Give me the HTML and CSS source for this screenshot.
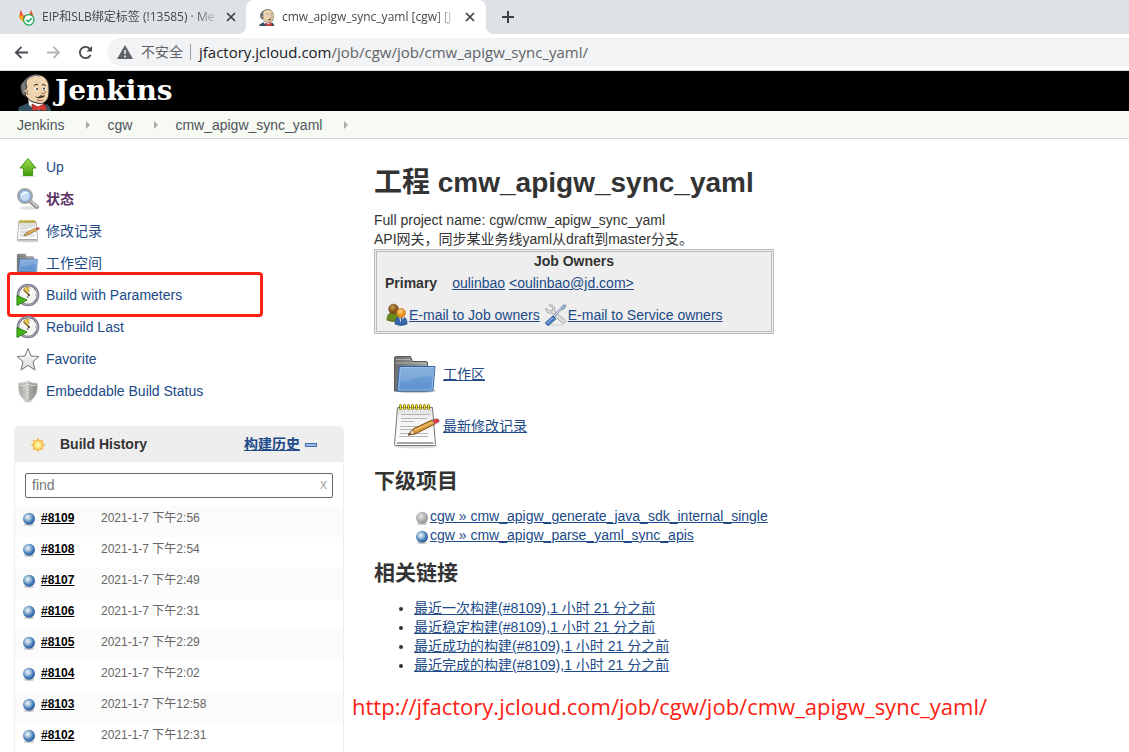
FILE: index.html
```html
<!DOCTYPE html>
<html lang="zh-CN">
<head>
<meta charset="utf-8">
<meta name="viewport" content="width=device-width, initial-scale=1">
<title>cmw_apigw_sync_yaml [cgw] [Jenkins]</title>
<link rel="stylesheet" href="styles.css">
</head>
<body>
<svg class="sprite" width="0" height="0" aria-hidden="true">
  <defs>
    <linearGradient id="gGreen" x1="0" y1="0" x2="0" y2="1"><stop offset="0" stop-color="#a3e052"/><stop offset="1" stop-color="#3f9a0c"/></linearGradient>
    <linearGradient id="gBlue" x1="0" y1="0" x2="0" y2="1"><stop offset="0" stop-color="#79a5d8"/><stop offset="1" stop-color="#5c92cf"/></linearGradient>
    <linearGradient id="gGrey" x1="0" y1="0" x2="1" y2="0"><stop offset="0" stop-color="#6e6e6e"/><stop offset="1" stop-color="#a3a3a3"/></linearGradient>
    <linearGradient id="gPaper" x1="0" y1="0" x2="0" y2="1"><stop offset="0" stop-color="#dcdcdc"/><stop offset=".3" stop-color="#f4f4f4"/><stop offset="1" stop-color="#fff"/></linearGradient>
    <linearGradient id="gShield" x1="0" y1="0" x2="1" y2="0"><stop offset="0" stop-color="#a2a29e"/><stop offset=".48" stop-color="#d2d2ce"/><stop offset=".52" stop-color="#aeaeaa"/><stop offset="1" stop-color="#888884"/></linearGradient>
    <linearGradient id="gStar" x1="0" y1="0" x2="0" y2="1"><stop offset="0" stop-color="#fff"/><stop offset="1" stop-color="#d8d8d8"/></linearGradient>
    <radialGradient id="gBall" cx=".4" cy=".38" r=".62"><stop offset="0" stop-color="#eff6fa"/><stop offset=".35" stop-color="#a9c5dc"/><stop offset=".7" stop-color="#4a7fbb"/><stop offset="1" stop-color="#2d5b9d"/></radialGradient>
    <radialGradient id="gBallGrey" cx=".4" cy=".38" r=".62"><stop offset="0" stop-color="#e4e4e4"/><stop offset=".5" stop-color="#bcbcbc"/><stop offset="1" stop-color="#8e8e8e"/></radialGradient>
    <radialGradient id="gSun"><stop offset="0" stop-color="#fffbc0"/><stop offset="1" stop-color="#fcd14c"/></radialGradient>
    <radialGradient id="gHeadA" cx=".4" cy=".3"><stop offset="0" stop-color="#c99a55"/><stop offset="1" stop-color="#835217"/></radialGradient>
    <radialGradient id="gHeadB" cx=".4" cy=".3"><stop offset="0" stop-color="#ffd27c"/><stop offset="1" stop-color="#e8901c"/></radialGradient>
  </defs>

  <symbol id="i-gitlab" viewBox="0 0 18 18">
    <path d="M1 9 3 1l2 6h7l2-6 3 8-9 7z" fill="#fc6d26"/><path d="M3 1l2 6H2zM14 1l-2 6h3z" fill="#e24329"/><path d="M5 7h7l-4 9z" fill="#e24329"/><path d="M1 9 2 7h3l3 9z" fill="#fca326"/>
    <circle cx="11.500" cy="11.500" r="5.500" fill="#fff" stroke="#1aaa55" stroke-width="1.300"/><path d="m9 11.500 2 2 3.500-3.700" fill="none" stroke="#1aaa55" stroke-width="1.600"/>
  </symbol>

  <symbol id="i-butler" viewBox="0 0 34 37">
    <path d="M1 37l1-4 9-4 10 4 9-3 3 3 1 4z" fill="#335061"/>
    <path d="M11 24h14l2 8-5 4h-4l-6-5z" fill="#fff"/>
    <path d="M8 20c-2-4-2-9 1-13C12 2 18 1 22 1c7 1 10 7 10 13s0 10-3 13-6 3-9 2c-5-1-9-3-10-6-1 0-2-1-2-3z" fill="#edd3ae" stroke="#231f20"/>
    <path d="M4 15c-1-3 0-5 2-7l4-4c-1 3-1 4-1 6l1 3-2 3 1 3-1 3c-3-1-4-4-4-7z" fill="#777a80" stroke="#231f20" stroke-width=".8"/>
    <path d="M8 7c4-5 9-7 15-5" fill="none" stroke="#777a80" stroke-width="1.400"/>
    <path d="M7 16c2-2 4 0 3 2l1 3" fill="#edd3ae" stroke="#6d4c3a" stroke-width=".8"/>
    <path d="M17 12c1-2 3-2 4-1M25 11c2-1 3 0 4 1" fill="none" stroke="#231f20"/>
    <path d="M25 14c1 2 4 4 3 5s-2 1-4 0" fill="none" stroke="#8c6a50"/>
    <ellipse cx="19.500" cy="15" rx="2.200" ry="1.500" fill="#fff"/><ellipse cx="27" cy="14.500" rx="2" ry="1.500" fill="#fff"/>
    <circle cx="20" cy="15" r="1" fill="#231f20"/><circle cx="27" cy="14.500" r="1" fill="#231f20"/>
    <path d="M18 22c2 2 4 1 6-1 1 1 3 1 4 0 0 2-2 3-4 3-2 1-5 0-6-2z" fill="#4c3a32"/><path d="M20 26c2 1 4 1 6 0" fill="none" stroke="#b5544a"/>
    <path d="m15 30 6 3 6-3 3 5-2 2-6-2-5 2-2-2z" fill="#d33833" stroke="#81231f" stroke-width=".7"/><circle cx="22" cy="34" r="1.700" fill="#ef3d3a"/>
  </symbol>

  <symbol id="i-up" viewBox="0 0 24 24">
    <ellipse cx="12" cy="21" rx="8" ry="1.500" fill="#e3e3e3"/>
    <path d="M12 3.500 20 13h-3.500v7.500h-9V13H4z" fill="url(#gGreen)" stroke="#419b13" stroke-linejoin="round"/>
  </symbol>
  <symbol id="i-search" viewBox="0 0 24 24">
    <ellipse cx="13" cy="21" rx="9" ry="1.800" fill="#dedede"/>
    <path d="m14 14 7 6" stroke="#888" stroke-width="4" stroke-linecap="round"/><path d="m15 14 6 5.500" stroke="#c8c8c8" stroke-width="2" stroke-linecap="round"/>
    <circle cx="9" cy="9" r="7" fill="#cfe0f5" stroke="#a6a6a6" stroke-width="2"/>
    <circle cx="9" cy="9" r="5.500" fill="#c6dcf5" stroke="#6f9ad0"/><path d="M5 9c1-5 5-5 8-3-2 0-5 1-8 3z" fill="#f2f8ff"/>
  </symbol>
  <symbol id="i-notes" viewBox="0 0 48 48">
    <ellipse cx="24" cy="44" rx="22" ry="2.500" fill="#ddd"/>
    <path d="M5.500 5.500h35l3 37q0 1-1 1h-39q-1 0-1-1z" fill="url(#gPaper)" stroke="#777"/>
    <path d="M5 40h36.500v2H4.500z" fill="#a7a7a7"/>
    <path d="M9 12.500h29M9 16.500h26M9 19.500h13M8 24.500h28M8 27.500h22M8 31.500h28M7 34.500h29" stroke="#b4b4b4"/>
    <g fill="#f5e04a" stroke="#8a7900"><rect x="7.500" y="2.500" width="2" height="5" rx="1"/><rect x="11.500" y="2.500" width="2" height="5" rx="1"/><rect x="15.500" y="2.500" width="2" height="5" rx="1"/><rect x="19.500" y="2.500" width="2" height="5" rx="1"/><rect x="23.500" y="2.500" width="2" height="5" rx="1"/><rect x="27.500" y="2.500" width="2" height="5" rx="1"/><rect x="31.500" y="2.500" width="2" height="5" rx="1"/><rect x="35.500" y="2.500" width="2" height="5" rx="1"/></g>
    <path d="m16 33 5-6 19-9 3 4-20 10z" fill="#d99a3c" stroke="#7d5112"/><path d="m21 29 20-9" stroke="#f4c778" stroke-width="1.300"/><path d="m16 33 5-6 2 5z" fill="#ead8a8" stroke="#6b4b18" stroke-width=".7"/><path d="m16 33 2-2 1 1z" fill="#222"/>
    <path d="m40 18 3-1q5-1 4 3l-4 2z" fill="#e2353b" stroke="#888" stroke-width=".7"/>
  </symbol>
  <symbol id="i-folder" viewBox="0 0 48 48">
    <ellipse cx="23" cy="41" rx="21" ry="2" fill="#ccc"/>
    <path d="M2.500 41V8q0-1.500 1.500-1.500h14.500l2 5H34q1.500 0 1.500 1.500v28z" fill="url(#gGrey)" stroke="#5c5c5c"/>
    <path d="M4 9.500h14M4 13h30" stroke="#b9b9b9" stroke-width=".8"/>
    <path d="M7.500 16.500h35.500L41 40q0 1-1.500 1H5z" fill="url(#gBlue)" stroke="#2f63a6"/>
    <path d="M8.500 17.500h33.500L40 40H6.500z" fill="none" stroke="#a7c5e8" stroke-width=".8"/><path d="M9 18h32l-1 9c-11-3-18 4-32 4z" fill="#fff" opacity=".12"/>
  </symbol>
  <symbol id="i-clock" viewBox="0 0 24 24">
    <circle cx="12" cy="12" r="10" fill="#f5f5f2" stroke="#77778a" stroke-width="2.600"/><circle cx="12" cy="12" r="10" fill="none" stroke="#b2b2be" stroke-width=".8"/>
    <path d="M12 12 7 7l3-3 3 0z" fill="#e9c34a" stroke="#9e8433" stroke-width=".6"/><path d="m8 7 5 5-2 3" fill="none" stroke="#555"/><circle cx="13" cy="12" r="1" fill="#333"/>
    <path d="M19 12h1M18 7l1-1M18 17l1 1" stroke="#888"/>
    <path d="M1 12.500v10L11 17z" fill="#45b51b" stroke="#2b7b0d" stroke-linejoin="round"/>
  </symbol>
  <symbol id="i-star" viewBox="0 0 24 24">
    <path d="m12 1.500 3 7.500 8 .5-6 5.200 2 8.300-7-4.500-7 4.500 2-8.300L1 9.500 9 9z" fill="url(#gStar)" stroke="#777" stroke-linejoin="round"/>
  </symbol>
  <symbol id="i-shield" viewBox="0 0 24 24">
    <ellipse cx="12" cy="22.500" rx="5" ry="1" fill="#ddd"/>
    <path d="M12 2c3 2 6 2.500 9 2 1 9-1 15-9 19-8-4-10-10-9-19 3 .5 6 0 9-2z" fill="url(#gShield)" stroke="#c4c4c0"/>
    <path d="M12 3v18" stroke="#eee" stroke-width="1.200" stroke-dasharray="1 1"/><path d="M4 6c3 1 5 1 7-1M20 6c-3 1-5 1-7-1" fill="none" stroke="#ddd"/>
  </symbol>
  <symbol id="i-ball" viewBox="0 0 14 14"><ellipse cx="7" cy="12.500" rx="5" ry="1.500" fill="#ccc"/><circle cx="7" cy="6.700" r="6" fill="url(#gBall)"/></symbol>
  <symbol id="i-ball-grey" viewBox="0 0 14 14"><ellipse cx="7" cy="12.500" rx="5" ry="1.500" fill="#ccc"/><circle cx="7" cy="6.700" r="6" fill="url(#gBallGrey)"/></symbol>
  <symbol id="i-sun" viewBox="0 0 16 16">
    <path d="m8 .5 2 3.200 3.400-1.100-1.100 3.400L15.500 8l-3.200 2 1.100 3.400-3.400-1.100L8 15.500l-2-3.200-3.400 1.100L3.700 10 .5 8l3.200-2-1.100-3.400L6 3.700z" fill="#f6b95b"/>
    <circle cx="8" cy="8" r="4.800" fill="url(#gSun)" stroke="#f3b04a" stroke-width=".8"/>
  </symbol>
  <symbol id="i-users" viewBox="0 0 24 24">
    <path d="M2 17c0-6 3-8 7-8 4 1 5 4 5 8q-6 3-12 0z" fill="#6c8a1c" stroke="#4d6610" stroke-width=".7"/><circle cx="8.500" cy="6" r="4.800" fill="url(#gHeadA)" stroke="#6a410f" stroke-width=".6"/>
    <path d="M10 21c0-6 2-7 6-7s6 1 6 7q-6 3-12 0z" fill="#3668ad" stroke="#1f4683" stroke-width=".7"/><path d="m14 14 2 6 3-6z" fill="#fff"/><path d="m16 15 1 5 0-5z" stroke="#29558f"/><circle cx="16" cy="10" r="4.500" fill="url(#gHeadB)" stroke="#b9680d" stroke-width=".6"/>
  </symbol>
  <symbol id="i-tools" viewBox="0 0 24 24">
    <ellipse cx="12" cy="22" rx="9" ry="1.300" fill="#ddd"/>
    <path d="M5 2l4 3-1 3-4-1-2-2c-1 4 2 6 6 5l10 10q4 1 3-3L11 9c1-4-2-8-6-7z" fill="#dedede" stroke="#a2a2a2" stroke-width=".9"/>
    <path d="m9 14 9-9" stroke="#8296b0" stroke-width="2.400"/><path d="m10 13 9-9" stroke="#e8eef5"/><path d="m17 5 2-3 3 0-1 3-3 2z" fill="#9db2cc" stroke="#667a96" stroke-width=".6"/>
    <path d="m9 13 3 3-7 6q-2 1-3-1t0-2z" fill="#4c7fc2" stroke="#2e5995" stroke-width=".8"/><path d="m9 15-6 5" stroke="#a5c4ea"/>
  </symbol>
  <symbol id="i-close" viewBox="0 0 10 10"><path d="m1 1 8 8M9 1 1 9" stroke="#3c4043" stroke-width="1.700"/></symbol>
</svg>

<div class="window">
  <nav class="tabs" aria-label="Tabs">
    <div class="tab">
      <svg class="favicon"><use href="#i-gitlab"/></svg>
      <span class="tab-title">EIP和SLB绑定标签 (!13585) · Me</span>
      <button class="tab-close" aria-label="Close tab"><svg><use href="#i-close"/></svg></button>
    </div>
    <div class="tab active">
      <svg class="favicon"><use href="#i-butler"/></svg>
      <span class="tab-title">cmw_apigw_sync_yaml [cgw] [J</span>
      <button class="tab-close" aria-label="Close tab"><svg><use href="#i-close"/></svg></button>
    </div>
    <button class="tab-new" aria-label="New tab"><svg viewBox="0 0 12 12"><path d="M6 0v12M0 6h12" stroke="#3c4043" stroke-width="2"/></svg></button>
  </nav>

  <div class="toolbar">
    <button class="nav-btn" aria-label="Back"><svg viewBox="0 0 16 16"><path d="M15 8H2M8 2 2 8l6 6" fill="none" stroke="#4a4d51" stroke-width="2"/></svg></button>
    <button class="nav-btn" aria-label="Forward"><svg viewBox="0 0 16 16"><path d="M1 8h13M8 2l6 6-6 6" fill="none" stroke="#b4b6b9" stroke-width="2"/></svg></button>
    <button class="nav-btn" aria-label="Reload"><svg viewBox="0 0 16 16"><path d="M13.500 10.500A6 6 0 1 1 12.500 4L14 5.500" fill="none" stroke="#4a4d51" stroke-width="2"/><path d="M15 1v6H9z" fill="#4a4d51"/></svg></button>
    <div class="address">
      <svg class="warn" viewBox="0 0 16 14"><path d="M8 0 16 14H0z" fill="#5f6368"/><path d="M8 5v4M8 10.500v2" stroke="#f1f3f4" stroke-width="1.600"/></svg>
      <span class="insecure">不安全</span>
      <span class="url"><b>jfactory.jcloud.com</b>/job/cgw/job/cmw_apigw_sync_yaml/</span>
    </div>
  </div>

  <header class="masthead">
    <a class="brand" href="#"><svg><use href="#i-butler"/></svg><span>Jenkins</span></a>
  </header>

  <nav class="crumbs" aria-label="Breadcrumb">
    <a href="#">Jenkins</a><svg viewBox="0 0 4 8"><path d="m0 0 4 4-4 4z" fill="#aaa"/></svg>
    <a href="#">cgw</a><svg viewBox="0 0 4 8"><path d="m0 0 4 4-4 4z" fill="#aaa"/></svg>
    <a href="#">cmw_apigw_sync_yaml</a><svg viewBox="0 0 4 8"><path d="m0 0 4 4-4 4z" fill="#aaa"/></svg>
  </nav>

  <div class="page">
    <aside class="side">
      <nav class="tasks" aria-label="Tasks">
        <a href="#"><svg><use href="#i-up"/></svg>Up</a>
        <a class="current" href="#"><svg><use href="#i-search"/></svg>状态</a>
        <a href="#"><svg><use href="#i-notes"/></svg>修改记录</a>
        <a href="#"><svg><use href="#i-folder"/></svg>工作空间</a>
        <a class="marked" href="#"><svg><use href="#i-clock"/></svg>Build with Parameters</a>
        <a href="#"><svg><use href="#i-clock"/></svg>Rebuild Last</a>
        <a href="#"><svg><use href="#i-star"/></svg>Favorite</a>
        <a href="#"><svg><use href="#i-shield"/></svg>Embeddable Build Status</a>
      </nav>

      <section class="history">
        <div class="history-head">
          <svg class="sun"><use href="#i-sun"/></svg>
          <span class="history-title">Build History</span>
          <a href="#">构建历史</a>
          <button class="collapse" aria-label="Collapse"></button>
        </div>
        <div class="find">
          <input type="text" placeholder="find" aria-label="find">
          <button aria-label="Clear">x</button>
        </div>
        <table class="builds">
          <tr><td><div><svg><use href="#i-ball"/></svg><a href="#">#8109</a></div></td><td>2021-1-7 下午2:56</td></tr>
          <tr><td><div><svg><use href="#i-ball"/></svg><a href="#">#8108</a></div></td><td>2021-1-7 下午2:54</td></tr>
          <tr><td><div><svg><use href="#i-ball"/></svg><a href="#">#8107</a></div></td><td>2021-1-7 下午2:49</td></tr>
          <tr><td><div><svg><use href="#i-ball"/></svg><a href="#">#8106</a></div></td><td>2021-1-7 下午2:31</td></tr>
          <tr><td><div><svg><use href="#i-ball"/></svg><a href="#">#8105</a></div></td><td>2021-1-7 下午2:29</td></tr>
          <tr><td><div><svg><use href="#i-ball"/></svg><a href="#">#8104</a></div></td><td>2021-1-7 下午2:02</td></tr>
          <tr><td><div><svg><use href="#i-ball"/></svg><a href="#">#8103</a></div></td><td>2021-1-7 下午12:58</td></tr>
          <tr><td><div><svg><use href="#i-ball"/></svg><a href="#">#8102</a></div></td><td>2021-1-7 下午12:31</td></tr>
        </table>
      </section>
    </aside>

    <main class="main">
      <h1>工程 cmw_apigw_sync_yaml</h1>
      <p>Full project name: cgw/cmw_apigw_sync_yaml</p>
      <p>API网关，同步某业务线yaml从draft到master分支。</p>

      <section class="owners">
        <h3>Job Owners</h3>
        <div class="primary"><b>Primary</b><span><a href="#">oulinbao</a> <a href="#">&lt;oulinbao@jd.com&gt;</a></span></div>
        <div class="mail">
          <svg><use href="#i-users"/></svg><a href="#">E-mail to Job owners</a>
          <svg class="tools"><use href="#i-tools"/></svg><a href="#">E-mail to Service owners</a>
        </div>
      </section>

      <div class="shortcuts">
        <div><svg><use href="#i-folder"/></svg><a href="#">工作区</a></div>
        <div><svg><use href="#i-notes"/></svg><a href="#">最新修改记录</a></div>
      </div>

      <h2>下级项目</h2>
      <ul class="downstream">
        <li><svg><use href="#i-ball-grey"/></svg><a href="#">cgw » cmw_apigw_generate_java_sdk_internal_single</a></li>
        <li><svg><use href="#i-ball"/></svg><a href="#">cgw » cmw_apigw_parse_yaml_sync_apis</a></li>
      </ul>

      <h2>相关链接</h2>
      <ul class="permalinks">
        <li><a href="#">最近一次构建(#8109),1 小时 21 分之前</a></li>
        <li><a href="#">最近稳定构建(#8109),1 小时 21 分之前</a></li>
        <li><a href="#">最近成功的构建(#8109),1 小时 21 分之前</a></li>
        <li><a href="#">最近完成的构建(#8109),1 小时 21 分之前</a></li>
      </ul>

      <p class="note">http://jfactory.jcloud.com/job/cgw/job/cmw_apigw_sync_yaml/</p>
    </main>
  </div>
</div>
</body>
</html>
```

FILE: styles.css
```css
* { box-sizing: border-box; }
body {
  margin: 0;
  background: #fff;
  color: #333;
  font: 14px/19px "Liberation Sans", Arial, "Noto Sans CJK SC", sans-serif;
}
h1, h2, h3, p, ul { margin: 0; padding: 0; }
a { color: #204a87; }
svg { display: block; flex: none; }
button { border: 0; padding: 0; background: none; font: inherit; }
.sprite { position: absolute; }
.window { display: flex; flex-direction: column; height: 100vh; overflow: hidden; }

/* Browser frame */
.tabs {
  display: flex;
  flex: none;
  height: 34px;
  background: #dee1e6;
  font: 12px/18px "Open Sans", "Noto Sans CJK SC", sans-serif;
  color: #45494d;
}
.tab { display: flex; align-items: center; width: 240px; padding: 0 10px 0 12px; }
.tab:first-child { width: 246px; padding: 0 9px 0 18px; }
.tab.active { position: relative; background: #fff; border-radius: 8px 8px 0 0; }
.tab.active::before, .tab.active::after {
  content: "";
  position: absolute;
  bottom: 0;
  width: 8px;
  height: 8px;
}
.tab.active::before { right: 100%; background: radial-gradient(circle at 0 0, #dee1e6 8px, #fff 8px); }
.tab.active::after { left: 100%; background: radial-gradient(circle at 100% 0, #dee1e6 8px, #fff 8px); }
.favicon { width: 17px; height: 17px; margin-right: 7px; }
.tab-title {
  flex: 1;
  white-space: nowrap;
  mask-image: linear-gradient(to left, transparent, #000 24px);
}
.tab-close { display: grid; place-items: center; width: 12px; height: 16px; margin-left: 6px; }
.tab-close svg { width: 10px; height: 10px; }
.tab-new { width: 44px; display: grid; place-items: center; }
.tab-new svg { width: 12px; height: 12px; }

.toolbar {
  display: flex;
  align-items: center;
  flex: none;
  height: 37px;
  padding-left: 13px;
  border-bottom: 1px solid #d9dbdd;
}
.nav-btn { display: grid; place-items: center; width: 32px; height: 28px; }
.nav-btn:first-child { width: 16px; margin-right: 8px; }
.nav-btn svg { width: 15px; height: 15px; }
.address {
  display: flex;
  align-items: center;
  flex: 1;
  height: 28px;
  margin-left: 6px;
  padding-left: 10px;
  border-radius: 14px 0 0 14px;
  background: #f1f3f4;
  color: #5f6368;
  font: 15px/20px "Open Sans", "Noto Sans CJK SC", sans-serif;
  white-space: nowrap;
}
.warn { width: 16px; height: 14px; margin-right: 8px; }
.insecure { padding-right: 7px; border-right: 1px solid #9aa0a6; line-height: 16px; font-size: 14px; }
.url { padding-left: 8px; }
.url b { font-weight: 400; color: #202124; }

/* Jenkins header */
.masthead { flex: none; height: 40px; padding-left: 17px; background: #000; }
.brand { display: inline-flex; color: #fff; text-decoration: none; font: bold 28px/40px "DejaVu Serif", serif; }
.brand svg { width: 34px; height: 37px; margin: 3px 4px 0 0; }

.crumbs {
  display: flex;
  align-items: center;
  flex: none;
  height: 28px;
  padding: 1px 0 0 17px;
  border-bottom: 1px solid #d3d7cf;
  background: #f6faf2;
}
.crumbs a { color: #4d545d; text-decoration: none; }
.crumbs svg { width: 4px; height: 8px; margin: 0 17px 0 22px; }

.page { display: flex; flex: 1; min-height: 0; }
.side { flex: none; width: 344px; padding: 12px 0 0 14px; }

.tasks a {
  position: relative;
  display: flex;
  align-items: center;
  height: 32px;
  padding-left: 2px;
  text-decoration: none;
}
.tasks svg { width: 24px; height: 24px; margin-right: 6px; }
.tasks .current { color: #5c3566; font-weight: 700; }
.tasks .marked::after {
  content: "";
  position: absolute;
  inset: -7px 81px -6px -7px;
  border: 3px solid #fc2113;
  border-radius: 4px;
}

/* Build history */
.history { margin-top: 19px; border: 1px solid #eee; border-radius: 4px 4px 0 0; }
.history-head {
  display: flex;
  align-items: center;
  height: 35px;
  padding: 0 26px 0 15px;
  border-radius: 4px 4px 0 0;
  background: #eee;
  font-weight: 700;
}
.sun { width: 16px; height: 16px; }
.history-title { flex: 1; padding-left: 14px; }
.collapse { width: 12px; height: 4px; margin-left: 5px; border: 1px solid #3e6faf; background: #9fbde2; }
.find { position: relative; padding: 11px 10px 8px; }
.find input {
  display: block;
  width: 100%;
  height: 25px;
  padding: 0 24px 2px 6px;
  border: 1px solid #666;
  border-radius: 2px;
  font: inherit;
}
.find input::placeholder { color: #777; opacity: 1; }
.find button { position: absolute; right: 16px; top: 13px; color: #aaa; }
.builds { width: 100%; border-collapse: collapse; font-size: 12px; line-height: 16px; }
.builds tr:nth-child(odd) { background: #fbfbfb; }
.builds td { height: 31px; padding: 4px 0 0; vertical-align: top; color: #666; }
.builds td:first-child { width: 86px; padding-left: 7px; }
.builds div { display: flex; }
.builds svg { width: 14px; height: 14px; margin: 2px 5px 0 0; }
.builds a { color: #000; font-weight: 700; }

/* Project */
.main { flex: 1; min-width: 0; padding: 28px 0 0 30px; }
h1 { margin-bottom: 12px; font-size: 28px; line-height: 32px; }
h2 { font-size: 21px; line-height: 26px; }
.owners { width: 400px; max-width: 100%; border: 3px double #bbb; background: #eee; }
.owners h3 { font-size: 14px; line-height: 19px; text-align: center; }
.primary { display: flex; gap: 15px; padding: 3px 8px; }
.mail { display: flex; align-items: center; padding: 7px 8px 4px; }
.mail svg { width: 24px; height: 24px; }
.mail svg.tools { margin-left: 4px; }
.shortcuts { padding: 14px 0 0 18px; }
.shortcuts div { display: flex; align-items: center; height: 52px; }
.shortcuts svg { width: 48px; height: 48px; margin-right: 3px; }
.shortcuts + h2 { margin-top: 16px; }
ul { padding-left: 40px; }
.downstream { margin: 13px 0 15px; list-style: none; }
.downstream li { display: flex; align-items: center; }
.downstream svg { width: 14px; height: 14px; margin: 2px 1px 0; }
.permalinks { margin: 13px 0 17px; }
.note {
  margin-left: -22px;
  color: #fc2113;
  font: 22px/28px "Open Sans", sans-serif;
}
```
